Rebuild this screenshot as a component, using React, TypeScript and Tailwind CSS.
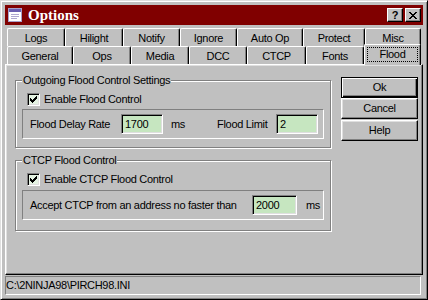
const ui = "font-['Liberation_Sans',Arial,sans-serif] text-[11px] leading-[13px] tracking-[-0.3px] text-black"

const row1 = [
  { label: "Logs", w: "w-[58px]" },
  { label: "Hilight", w: "w-[58px]" },
  { label: "Notify", w: "w-[57px]" },
  { label: "Ignore", w: "w-[57px]" },
  { label: "Auto Op", w: "w-[66px]" },
  { label: "Protect", w: "w-[62px]" },
  { label: "Misc", w: "w-[56px]" },
]

const row2 = [
  { label: "General", w: "w-[66px]" },
  { label: "Ops", w: "w-[58px]" },
  { label: "Media", w: "w-[58px]" },
  { label: "DCC", w: "w-[58px]" },
  { label: "CTCP", w: "w-[59px]" },
  { label: "Fonts", w: "w-[58px]" },
]

function Tab({ label, w }: { label: string; w: string }) {
  return (
    <div className={`${w} h-[18px] flex items-center justify-center pt-[1px] border-t border-l border-r border-white border-r-black rounded-t-[2px] shadow-[inset_-1px_0_0_#808080]`}>
      {label}
    </div>
  )
}

function Check() {
  return (
    <div className="w-[13px] h-[13px] border-t border-l border-r border-b border-[#808080] border-r-white border-b-white shadow-[inset_1px_1px_0_#000,inset_-1px_-1px_0_#dfdfdf] bg-[#e4f2e2] flex items-center justify-center">
      <svg width="9" height="9" viewBox="0 0 9 9" shapeRendering="crispEdges">
        <path d="M1 3h1v3h-1zM2 4h1v3h-1zM3 5h1v3h-1zM4 4h1v3h-1zM5 3h1v3h-1zM6 2h1v3h-1zM7 1h1v3h-1z" fill="#000" />
      </svg>
    </div>
  )
}

function Field({ value, w }: { value: string; w: string }) {
  return (
    <div className={`${w} h-[20px] border-t border-l border-r border-b border-[#808080] border-r-white border-b-white shadow-[inset_1px_1px_0_#000,inset_-1px_-1px_0_#dfdfdf] bg-[#c6e6c0] flex items-center pl-[3px]`}>
      {value}
    </div>
  )
}

function Group({ title, children, className }: { title: string; children: React.ReactNode; className?: string }) {
  return (
    <div className={`border border-[#808080] shadow-[inset_1px_1px_0_#fff,1px_1px_0_#fff] flex flex-col ${className ?? ""}`}>
      <div className="-mt-[7px] ml-[6px] w-fit bg-[#c0c0c0] px-[1px] h-[13px]">{title}</div>
      {children}
    </div>
  )
}

function Button({ label, primary, className }: { label: string; primary?: boolean; className?: string }) {
  const frame = primary
    ? "border border-black shadow-[inset_1px_1px_0_#fff,inset_-1px_-1px_0_#000,inset_-2px_-2px_0_#808080]"
    : "border-t border-l border-r border-b border-white border-r-black border-b-black shadow-[inset_-1px_-1px_0_#808080,inset_1px_1px_0_#dfdfdf]"
  return (
    <div className={`h-[21px] w-[77px] flex items-center justify-center ${frame} ${className ?? ""}`}>
      {label}
    </div>
  )
}

export default function App() {
  return (
    <div className={`${ui} w-[428px] h-[300px] bg-[#c0c0c0] border border-[#dfdfdf] border-r-black border-b-black shadow-[inset_1px_1px_0_#fff,inset_-1px_-1px_0_#808080] p-[4px] flex flex-col`}>
      {/* title bar */}
      <div className="h-[20px] bg-[#800000] flex items-center pl-[3px] pr-[2px]">
        <svg width="14" height="14" viewBox="0 0 14 14" shapeRendering="crispEdges">
          <rect x="0.5" y="0.5" width="13" height="13" fill="#fff" stroke="#a8a0c8" />
          <rect x="1" y="1" width="12" height="3" fill="#6a5fb0" />
          <rect x="3" y="6" width="8" height="1" fill="#b0a8d0" />
          <rect x="3" y="8" width="8" height="1" fill="#b0a8d0" />
          <rect x="3" y="10" width="6" height="1" fill="#b0a8d0" />
        </svg>
        <span className="ml-[6px] font-['Liberation_Serif',serif] font-bold text-[15px] tracking-normal text-white leading-none">Options</span>
        <div className="ml-auto flex gap-[2px]">
          <div className="w-[16px] h-[14px] border-t border-l border-r border-b border-white border-r-black border-b-black shadow-[inset_-1px_-1px_0_#808080] bg-[#c0c0c0] flex items-center justify-center font-bold text-[11px] leading-none">?</div>
          <div className="w-[16px] h-[14px] border-t border-l border-r border-b border-white border-r-black border-b-black shadow-[inset_-1px_-1px_0_#808080] bg-[#c0c0c0] flex items-center justify-center">
            <svg width="8" height="7" viewBox="0 0 8 7" shapeRendering="crispEdges">
              <path d="M0 0h2v1h-2zM6 0h2v1h-2zM1 1h2v1h-2zM5 1h2v1h-2zM2 2h4v1h-4zM3 3h2v1h-2zM2 4h4v1h-4zM1 5h2v1h-2zM5 5h2v1h-2zM0 6h2v1h-2zM6 6h2v1h-2z" fill="#000" />
            </svg>
          </div>
        </div>
      </div>

      {/* tabs */}
      <div className="pt-[3px] px-[2px] flex flex-col">
        <div className="flex">
          {row1.map((t) => (
            <Tab key={t.label} {...t} />
          ))}
        </div>
        <div className="flex">
          {row2.map((t) => (
            <Tab key={t.label} {...t} />
          ))}
          <div className="relative z-10 w-[57px] h-[21px] -mt-[2px] -mb-[1px] bg-[#c0c0c0] border-t border-l border-r border-white border-r-black rounded-t-[2px] shadow-[inset_-1px_0_0_#808080] p-[2px] pb-[3px] flex">
            <div className="flex-1 border border-dotted border-black flex items-center justify-center">Flood</div>
          </div>
        </div>
      </div>

      {/* page */}
      <div className="h-[211px] border-t border-l border-r border-b border-white border-r-black border-b-black shadow-[inset_-1px_-1px_0_#808080,inset_1px_1px_0_#dfdfdf] flex">
        <div className="ml-[9px] mt-[15px] w-[316px] flex flex-col">
          <Group title="Outgoing Flood Control Settings" className="pb-[8px]">
            <div className="mt-[6px] ml-[11px] h-[13px] flex items-center gap-[4px]">
              <Check />
              <span>Enable Flood Control</span>
            </div>
            <div className="mt-[3px] ml-[6px] w-[302px] h-[30px] border-t border-l border-r border-b border-[#808080] border-r-white border-b-white flex items-center pl-[7px] pr-[5px]">
              <span className="w-[91px]">Flood Delay Rate</span>
              <Field value="1700" w="w-[42px]" />
              <span className="ml-[8px]">ms</span>
              <span className="ml-auto w-[59px]">Flood Limit</span>
              <Field value="2" w="w-[42px]" />
            </div>
          </Group>

          <Group title="CTCP Flood Control" className="mt-[12px] pb-[10px]">
            <div className="mt-[6px] ml-[11px] h-[13px] flex items-center gap-[4px]">
              <Check />
              <span>Enable CTCP Flood Control</span>
            </div>
            <div className="mt-[4px] ml-[6px] w-[302px] h-[30px] border-t border-l border-r border-b border-[#808080] border-r-white border-b-white flex items-center pl-[7px]">
              <span className="w-[222px]">Accept CTCP from an address no faster than</span>
              <Field value="2000" w="w-[45px]" />
              <span className="ml-[9px]">ms</span>
            </div>
          </Group>
        </div>

        <div className="ml-[10px] mt-[12px] flex flex-col">
          <Button label="Ok" primary />
          <Button label="Cancel" />
          <Button label="Help" className="mt-[1px]" />
        </div>
      </div>

      {/* status bar */}
      <div className="mt-[1px] mr-[2px] h-[19px] border-t border-l border-r border-b border-[#808080] border-r-white border-b-white flex items-center">
        C:\2NINJA98\PIRCH98.INI
      </div>
    </div>
  )
}
